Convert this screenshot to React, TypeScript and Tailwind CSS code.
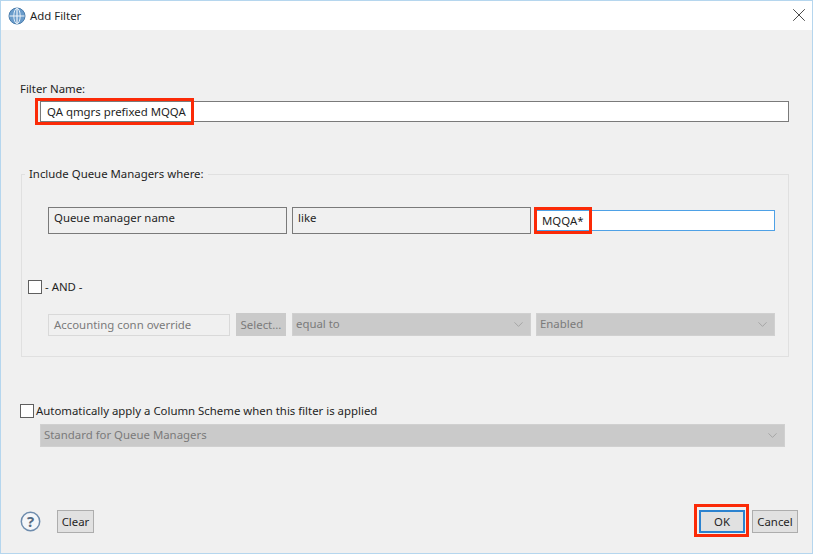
import React from "react";
import { X, ChevronDown } from "lucide-react";

function Globe() {
  return (
    <svg width="18" height="18" viewBox="0 0 18 18" className="shrink-0">
      <circle cx="9" cy="9" r="8" fill="#6a9ccb" stroke="#4a7dac" />
      <ellipse cx="9" cy="9" rx="3.2" ry="7.6" fill="none" stroke="#e3edf6" strokeWidth="1" />
      <path d="M1.5 9H16.5M9 1.5V16.5" stroke="#eef4fa" strokeWidth="1.2" />
    </svg>
  );
}

function Check() {
  return <span className="block w-[14px] h-[14px] border border-[#5f5f5f] bg-white shrink-0" />;
}

function Sel({ text, w }: { text: string; w: string }) {
  return (
    <div className={`${w} h-[23px] bg-[#cacaca] border border-[#d0d0d0] flex items-center justify-between pl-[3px] pr-[4px] text-[#7a7a7a]`}>
      <span className="relative top-[-0.5px]">{text}</span>
      <ChevronDown size={15} strokeWidth={1} className="text-[#8f8f8f]" />
    </div>
  );
}

function Btn({ children, w, border = "border border-[#adadad]" }: { children: React.ReactNode; w: string; border?: string }) {
  return (
    <div className={`${w} h-[23px] bg-[#e1e1e1] ${border} flex items-center justify-center text-[#1f1f1f]`}>
      {children}
    </div>
  );
}

function RoBox({ text }: { text: string }) {
  return (
    <div className="w-[239px] h-[27px] border border-[#7a7a7a] pl-[5px] leading-[20px] text-[#1f1f1f]">{text}</div>
  );
}

export default function App() {
  return (
    <div
      className="w-[813px] h-[554px] bg-[#f0f0f0] border border-[#b5d6ee] flex flex-col text-[11.4px] text-[#1f1f1f] overflow-hidden"
      style={{ fontFamily: '"Noto Sans", "Open Sans", sans-serif' }}
    >
      <div className="h-[29px] bg-white flex items-center pl-[7px] pr-[2px] shrink-0">
        <Globe />
        <span className="ml-[4px] flex-1">Add Filter</span>
        <X size={22} strokeWidth={0.9} className="text-[#222] mt-[-1px]" />
      </div>

      <div className="pl-[19px] mt-[51px] leading-[16px]">Filter Name:</div>
      <div className="relative ml-[39px] mt-[4px] w-[749px] h-[21px] border border-[#7a7a7a] bg-white pl-[6px] leading-[20px]">
        QA qmgrs prefixed MQQA
        <div className="absolute left-[-6px] top-[-4px] w-[159px] h-[27px] border-[3px] border-[#fb2a07]" />
      </div>

      <div className="relative ml-[20px] mt-[52px] w-[768px] h-[183px] border border-[#e0e0e0] shrink-0 flex flex-col">
        <span className="absolute left-[3px] top-[-9px] bg-[#f0f0f0] px-[4px] leading-[16px]">Include Queue Managers where:</span>

        <div className="flex ml-[26px] mt-[32px] gap-[5px] items-start">
          <RoBox text="Queue manager name" />
          <RoBox text="like" />
          <div className="relative w-[239px] h-[21px] mt-[3px] border border-[#4ea1e6] bg-white pl-[5px] leading-[19px]">
            MQQA*
            <div className="absolute left-[-3px] top-[-4px] w-[58px] h-[27px] border-[3px] border-[#fb2a07]" />
          </div>
        </div>

        <div className="flex items-center ml-[6px] mt-[45px] gap-[3px] h-[16px]">
          <Check />
          <span>- AND -</span>
        </div>

        <div className="flex ml-[26px] mt-[18px] items-center">
          <div className="w-[182px] h-[22px] border border-[#d9d9d9] pl-[5px] leading-[20px] text-[#7a7a7a]">Accounting conn override</div>
          <div className="ml-[6px] w-[50px] h-[23px] bg-[#cacaca] flex items-center justify-center text-[#7a7a7a]">Select...</div>
          <div className="ml-[6px]"><Sel text="equal to" w="w-[239px]" /></div>
          <div className="ml-[5px]"><Sel text="Enabled" w="w-[239px]" /></div>
        </div>
      </div>

      <div className="flex items-center ml-[19px] mt-[46px] gap-[2px] h-[16px]">
        <Check />
        <span>Automatically apply a Column Scheme when this filter is applied</span>
      </div>
      <div className="ml-[39px] mt-[5px]"><Sel text="Standard for Queue Managers" w="w-[745px]" /></div>

      <div className="flex items-center ml-[19px] mt-[63px] mr-[14px]">
        <svg width="21" height="21" viewBox="0 0 21 21">
          <circle cx="10.5" cy="10.5" r="9.2" fill="#f4f6f9" stroke="#6e8cad" strokeWidth="1.5" />
          <text x="10.5" y="15.6" textAnchor="middle" fontSize="15" fontWeight="700" fill="#556a82" fontFamily="Noto Sans, sans-serif">?</text>
        </svg>
        <Btn w="w-[37px] ml-[16px]">Clear</Btn>
        <div className="flex-1" />
        <div className="relative">
          <Btn w="w-[46px]" border="border-2 border-[#2b82cf]">OK</Btn>
          <div className="absolute left-[-5px] top-[-6px] w-[55px] h-[33px] border-[3px] border-[#fb2a07]" />
        </div>
        <Btn w="w-[46px] ml-[7px]">Cancel</Btn>
      </div>
    </div>
  );
}
